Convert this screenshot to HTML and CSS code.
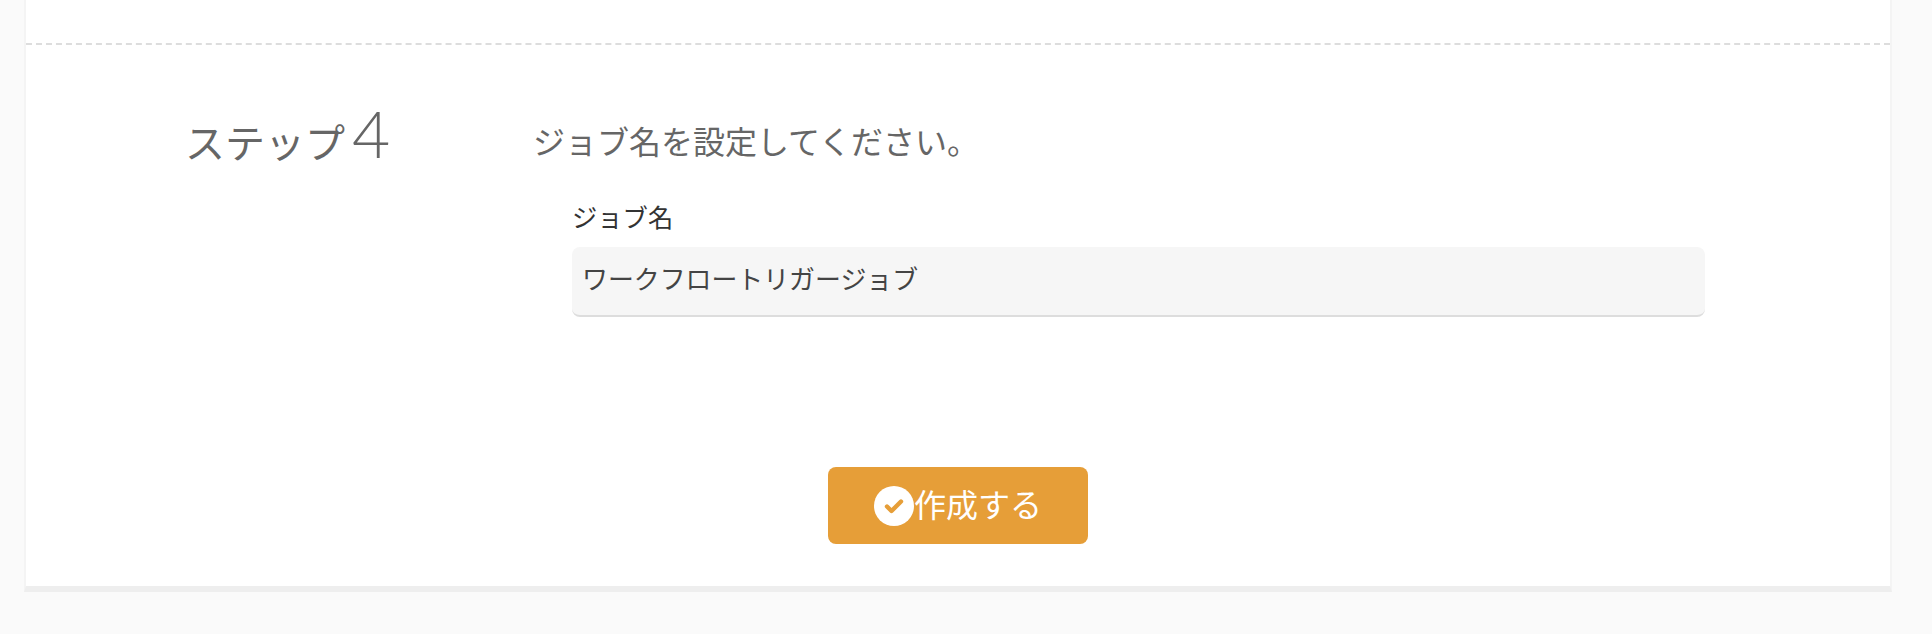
FILE: index.html
```html
<!DOCTYPE html>
<html lang="ja">
<head>
    <meta charset="UTF-8">
    <meta name="viewport" content="width=device-width, initial-scale=1.0">
    <title>ジョブ作成</title>
    <link rel="stylesheet" href="styles.css">
</head>
<body>

    <div class="card">
        <div class="card-top"></div>

        <!-- ステップ4 -->
        <div class="step">
            <div class="step-label">ステップ<span class="step-num">4</span></div>
            <div class="step-body">
                <p class="step-title">ジョブ名を設定してください。</p>
                <div class="field">
                    <label class="field-label" for="job-name">ジョブ名</label>
                    <div class="field-input" id="job-name">ワークフロートリガージョブ</div>
                </div>
            </div>
        </div>

        <div class="actions">
            <button class="create-btn" type="button">
                <svg class="create-icon" viewBox="0 0 40 40" width="40" height="40">
                    <circle cx="20" cy="20" r="20" fill="#fff"/>
                    <path d="M13 20.5l4.5 4.5 9.5-9.5" fill="none" stroke="#e69e38" stroke-width="4.4" stroke-linecap="round" stroke-linejoin="round"/>
                </svg>
                <span class="create-text">作成する</span>
            </button>
        </div>
    </div>

</body>
</html>
```

FILE: styles.css
```css
body {
    margin: 0;
    background-color: #fafafa;
    color: #333;
    font-family: "Noto Sans CJK JP", "Noto Sans", sans-serif;
}

.card {
    margin: 0 40px 0 24px;
    height: 592px;
    box-sizing: border-box;
    background-color: white;
    border-left: 2px solid #f4f4f4;
    border-right: 2px solid #f4f4f4;
    border-bottom: 6px solid #eee;
}

.card-top {
    height: 43px;
    border-bottom: 2px dashed #ddd;
}

.step {
    display: flex;
    padding-top: 60px;
    height: 377px;
    box-sizing: border-box;
}

.step-label {
    width: 507px;
    padding-left: 159px;
    box-sizing: border-box;
    color: #666;
    font-size: 40px;
    font-weight: 400;
    line-height: 56px;
    flex-shrink: 0;
}

.step-num {
    font-family: "Lato", sans-serif;
    font-size: 66px;
    font-weight: 300;
    margin-left: 7px;
}

.step-body {
    flex: 1;
}

.step-title {
    margin: 7px 0 0;
    color: #666;
    font-size: 32px;
    line-height: 56px;
}

.field {
    margin: 30px 0 0 39px;
    width: 1133px;
}

.field-label {
    display: block;
    font-size: 25.3px;
    line-height: 36px;
}

.field-input {
    margin-top: 13px;
    height: 70px;
    box-sizing: border-box;
    padding-left: 10px;
    background-color: #f6f6f6;
    border-bottom: 2px solid #ddd;
    border-radius: 8px;
    color: #444;
    font-size: 25.9px;
    line-height: 62px;
}

.actions {
    display: flex;
    justify-content: center;
    margin-top: 45px;
}

.create-btn {
    display: flex;
    align-items: center;
    justify-content: center;
    width: 260px;
    height: 77px;
    padding: 0;
    border: none;
    border-radius: 8px;
    background-color: #e69e38;
    color: white;
    font-family: inherit;
    font-size: 32px;
    cursor: pointer;
}

.create-text {
    margin-bottom: 5px;
}
```
